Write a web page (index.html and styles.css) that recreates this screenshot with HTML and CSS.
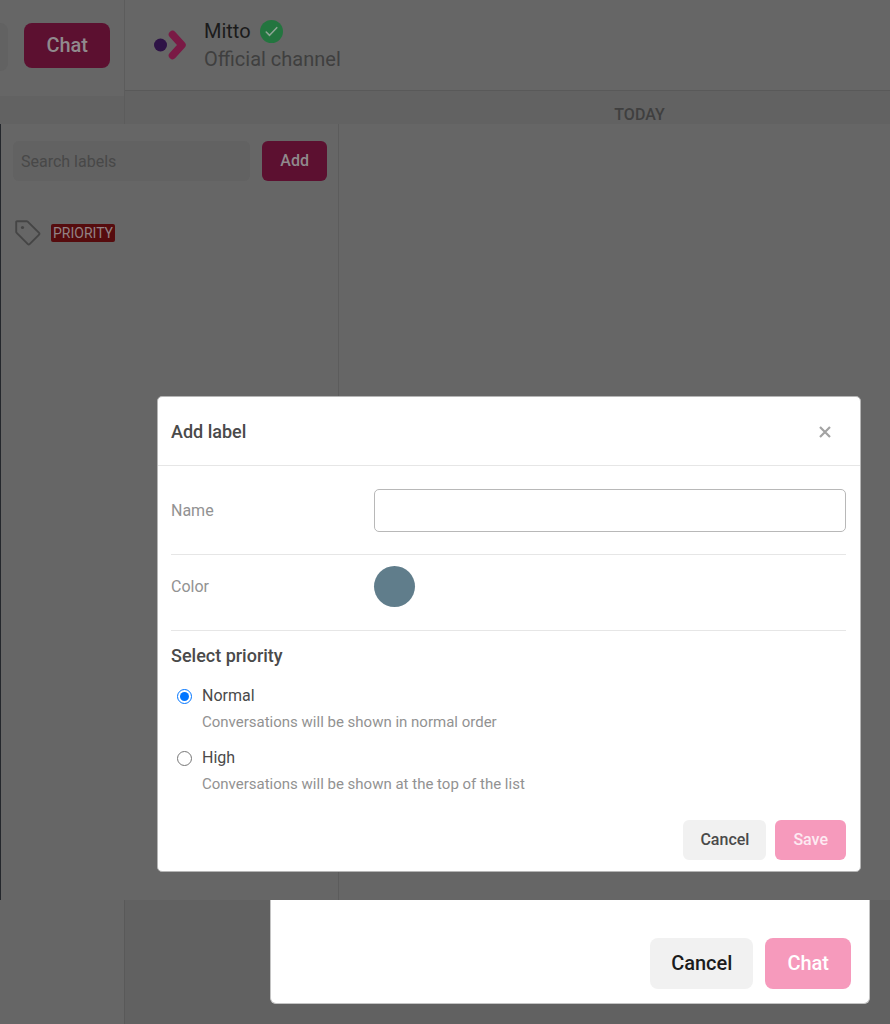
FILE: index.html
```html
<!DOCTYPE html>
<html lang="en">
<head>
<meta charset="utf-8">
<meta name="viewport" content="width=device-width, initial-scale=1">
<title>Add label</title>
<link rel="stylesheet" href="styles.css">
</head>
<body>
<div class="app">
  <header class="top">
    <div class="top-side">
      <div class="top-actions">
        <span class="field-end"></span>
        <button class="btn btn-large btn-brand" type="button">Chat</button>
      </div>
    </div>
    <div class="top-main">
      <div class="channel">
        <svg class="channel-logo" viewBox="0 0 34 30" aria-hidden="true">
          <circle cx="7.500" cy="15" r="6.500" fill="#2e1346"/>
          <path d="M19.500 4.500l9.500 10.500L19.500 25.500" fill="none" stroke="#7a1a45" stroke-width="7.500" stroke-linecap="round" stroke-linejoin="round"/>
        </svg>
        <div class="channel-text">
          <div class="channel-name">Mitto
            <svg class="verified" viewBox="0 0 24 24" aria-hidden="true">
              <circle cx="12" cy="12" r="12" fill="#23753f"/>
              <path d="M6.5 12.5l3.5 3.5 7.5-8" fill="none" stroke="#8fa596" stroke-width="1.6" stroke-linecap="round" stroke-linejoin="round"/>
            </svg>
          </div>
          <div class="channel-type">Official channel</div>
        </div>
      </div>
      <div class="day">TODAY</div>
    </div>
  </header>

  <main class="labels">
    <aside class="labels-side">
      <div class="labels-tools">
        <input class="search" type="search" placeholder="Search labels" aria-label="Search labels">
        <button class="btn btn-brand" type="button">Add</button>
      </div>
      <div class="label-row">
        <svg class="tag-icon" viewBox="0 0 26 26" aria-hidden="true">
          <path d="M2 1.2h9.6c.4 0 .8.2 1.1.5l11.4 11.2c.5.5.5 1.200 0 1.700L14.600 24.100c-.5.5-1.200.5-1.700 0L1.700 12.900c-.3-.3-.5-.7-.5-1.100V2c0-.5.3-.8.8-.8z" fill="none" stroke="#454545" stroke-width="1.900" stroke-linejoin="round"/>
          <circle cx="7.500" cy="7.500" r="1.600" fill="#454545"/>
        </svg>
        <span class="label-chip">PRIORITY</span>
      </div>
    </aside>

    <form class="modal" role="dialog" aria-labelledby="modal-title">
      <div class="modal-head">
        <h2 class="title" id="modal-title">Add label</h2>
        <button class="close" type="button" aria-label="Close">
          <svg class="close-icon" viewBox="0 0 12 12" aria-hidden="true">
            <path d="M1 1l10 10M11 1L1 11" fill="none" stroke="#a3a3a3" stroke-width="2.200"/>
          </svg>
        </button>
      </div>
      <div class="modal-body">
        <div class="row row-name">
          <label class="row-label" for="name">Name</label>
          <input class="name-input" id="name" type="text">
        </div>
        <div class="row row-color">
          <span class="row-label" id="color-label">Color</span>
          <button class="swatch" type="button" aria-labelledby="color-label"></button>
        </div>
        <fieldset class="priority">
          <legend class="title">Select priority</legend>
          <div class="option">
            <input class="radio" type="radio" name="priority" id="normal" checked>
            <label class="option-name" for="normal">Normal</label>
            <p class="option-note">Conversations will be shown in normal order</p>
          </div>
          <div class="option">
            <input class="radio" type="radio" name="priority" id="high">
            <label class="option-name" for="high">High</label>
            <p class="option-note">Conversations will be shown at the top of the list</p>
          </div>
        </fieldset>
        <div class="modal-foot">
          <button class="btn btn-plain" type="button">Cancel</button>
          <button class="btn btn-soft" type="submit">Save</button>
        </div>
      </div>
    </form>
  </main>

  <footer class="bottom">
    <div class="sheet">
      <button class="btn btn-large btn-plain btn-dark" type="button">Cancel</button>
      <button class="btn btn-large btn-soft" type="button">Chat</button>
    </div>
  </footer>
</div>
</body>
</html>
```

FILE: styles.css
```css
* {
  box-sizing: border-box;
}

body {
  margin: 0;
  background: #666;
  color: #444;
  font-family: Roboto, "Liberation Sans", sans-serif;
  font-size: 16px;
}

button,
input {
  font: inherit;
}

.app {
  display: flex;
  flex-direction: column;
  min-height: 100vh;
}

/* Buttons */
.btn {
  padding: 0 18px;
  border: 0;
  border-radius: 6px;
  font-weight: 500;
  line-height: 40px;
}

.btn-large {
  padding: 0 22px;
  border-radius: 8px;
  font-size: 20px;
  line-height: 51px;
}

.btn-brand {
  background: #5c1030;
  color: #908a8d;
}

.top .btn-large {
  line-height: 45px;
}

.btn-plain {
  padding: 0 17px;
  background: #f1f1f1;
  color: #4a4a4a;
}

.btn-dark {
  padding: 0 21px;
  color: #1c1c1c;
}

.btn-soft {
  background: #f69abc;
  color: #fdeaf2;
}

.btn-large.btn-soft {
  color: #fff;
}

/* Top band */
.top {
  display: grid;
  grid-template-columns: 125px 1fr;
}

.top-side {
  border-right: 1px solid #5c5c5c;
  background: #626262;
}

.top-actions {
  display: flex;
  justify-content: space-between;
  align-items: flex-start;
  height: 96px;
  padding: 23px 14px 0 0;
  background: #666;
}

.field-end {
  width: 8px;
  height: 48px;
  border-radius: 0 8px 8px 0;
  background: #626262;
}

.top-main {
  background: #626262;
}

.channel {
  display: flex;
  align-items: center;
  gap: 17px;
  height: 91px;
  padding: 0 28px;
  border-bottom: 1px solid #595959;
  background: #666;
}

.channel-logo {
  width: 34px;
  height: 30px;
}

.channel-text {
  font-size: 20px;
  line-height: 28px;
}

.channel-name {
  display: flex;
  align-items: center;
  gap: 9px;
  color: #1b1b1b;
}

.verified {
  width: 23px;
  height: 23px;
}

.channel-type {
  color: #3f3f3f;
}

.day {
  padding-top: 15px;
  margin-left: 264px;
  color: #3f3f3f;
  font-weight: 500;
  line-height: 18px;
  text-align: center;
}

/* Labels band */
.labels {
  display: grid;
  grid-template-columns: 338px 1fr;
  border-left: 1px solid #24272c;
  background: #666;
}

.labels-side {
  grid-area: 1 / 1;
  padding: 17px 11px 17px 12px;
  border-right: 1px solid #5c5c5c;
}

.labels-tools {
  display: flex;
  gap: 12px;
}

.search {
  flex: 1;
  min-width: 0;
  padding: 0 8px;
  border: 0;
  border-radius: 6px;
  background: #626262;
  color: #333;
}

.search::placeholder {
  color: #484848;
}

.label-row {
  display: flex;
  align-items: center;
  gap: 10px;
  padding: 39px 2px 0;
}

.tag-icon {
  width: 26px;
  height: 26px;
}

.label-chip {
  padding: 0 2px;
  border-radius: 2px;
  background: #560c0e;
  color: #928284;
  font-size: 14px;
  line-height: 18px;
}

/* Modal */
.modal {
  z-index: 1;
  grid-area: 1 / 1 / 2 / 3;
  margin: 272px 29px 28px 156px;
  border: 1px solid #b5b5b5;
  border-radius: 5px;
  background: #fff;
}

.modal-head {
  display: flex;
  justify-content: space-between;
  align-items: center;
  height: 69px;
  padding: 1px 29px 0 13px;
  border-bottom: 1px solid #e6e6e6;
}

.title {
  margin: 0;
  padding: 0;
  color: #4a4a4a;
  font-size: 18px;
  font-weight: 500;
  line-height: 24px;
}

.close {
  display: flex;
  padding: 0;
  border: 0;
  background: none;
}

.close-icon {
  width: 12px;
  height: 12px;
}

.modal-body {
  padding: 0 14px 11px 13px;
}

.row {
  display: grid;
  grid-template-columns: 203px 1fr;
  align-items: center;
  border-bottom: 1px solid #e6e6e6;
}

.row-name {
  height: 89px;
}

.row-color {
  height: 76px;
  padding-bottom: 12px;
}

.row-label {
  color: #929292;
}

.name-input {
  width: 100%;
  height: 43px;
  padding: 0 12px;
  border: 1px solid #b8b8b8;
  border-radius: 5px;
  background: #fff;
}

.swatch {
  width: 41px;
  height: 41px;
  padding: 0;
  border: 0;
  border-radius: 50%;
  background: #607d8b;
}

.priority {
  min-width: 0;
  margin: 0;
  padding: 0;
  border: 0;
}

.priority .title {
  padding: 13px 0 14px;
}

.option {
  display: grid;
  grid-template-columns: 16px 1fr;
  align-items: center;
  column-gap: 9px;
  padding: 0 0 10px 6px;
}

.radio {
  width: 15px;
  height: 15px;
  margin: 0;
}

.option-name {
  color: #4a4a4a;
  line-height: 28px;
}

.option-note {
  grid-column: 2;
  margin: 0;
  color: #929292;
  font-size: 15px;
  line-height: 24px;
}

.modal-foot {
  display: flex;
  justify-content: flex-end;
  gap: 9px;
  padding-top: 14px;
}

/* Bottom band */
.bottom {
  display: flex;
  flex: 1;
  align-items: flex-start;
  margin-left: 124px;
  padding: 0 20px 19px 145px;
  border-left: 1px solid #595959;
  background: #616161;
}

.sheet {
  display: flex;
  flex: 1;
  justify-content: flex-end;
  gap: 12px;
  padding: 38px 18px 14px;
  border: 1px solid #c4c4c4;
  border-top: 0;
  border-radius: 0 0 6px 6px;
  background: #fff;
}
```
